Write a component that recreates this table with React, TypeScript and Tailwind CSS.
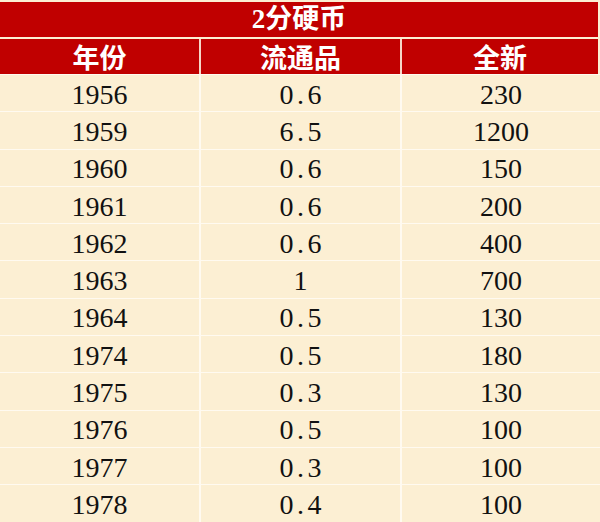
const rows: [string, string, string][] = [
  ['1956', '0.6', '230'],
  ['1959', '6.5', '1200'],
  ['1960', '0.6', '150'],
  ['1961', '0.6', '200'],
  ['1962', '0.6', '400'],
  ['1963', '1', '700'],
  ['1964', '0.5', '130'],
  ['1974', '0.5', '180'],
  ['1975', '0.3', '130'],
  ['1976', '0.5', '100'],
  ['1977', '0.3', '100'],
  ['1978', '0.4', '100'],
];

// every ascii char takes half an em, like a song-style font
function Num({ value }: { value: string }) {
  return (
    <span className="inline-flex">
      {value.split('').map((ch, i) => (
        <span key={i} className="inline-block w-[0.5em] text-center">{ch}</span>
      ))}
    </span>
  );
}

export default function App() {
  return (
    <div className="w-[600px] h-[522px] overflow-hidden bg-[#fcefd3] pt-[2px]">
      <div className="mr-[2px] flex h-[35px] items-center justify-center bg-[#c00000] text-[27px] font-bold text-white [font-family:'Liberation_Serif','Noto_Sans_CJK_SC',serif]">
        <span className="leading-none">2分硬币</span>
      </div>
      <div className="mr-[2px] mt-[2px] grid h-[35px] grid-cols-[199px_199px_1fr] gap-x-[2px] bg-[#f6d6c8] text-[27px] font-bold text-white [font-family:'Noto_Sans_CJK_SC',sans-serif]">
        <div className="flex items-center justify-center bg-[#c00000] leading-none">年份</div>
        <div className="flex items-center justify-center bg-[#c00000] leading-none">流通品</div>
        <div className="flex items-center justify-center bg-[#c00000] leading-none">全新</div>
      </div>
      <div className="text-[28px] text-[#111] [font-family:'Liberation_Serif',serif]">
        {rows.map(([year, used, mint]) => (
          <div key={year} className="grid h-[37.3px] grid-cols-[199px_2px_199px_2px_1fr] border-t border-[#fffaf0]">
            <div className="flex items-center justify-center pt-[3px] leading-none"><Num value={year} /></div>
            <div className="bg-[#fffaf0]" />
            <div className="flex items-center justify-center pt-[3px] leading-none"><Num value={used} /></div>
            <div className="bg-[#fffaf0]" />
            <div className="flex items-center justify-center pt-[3px] leading-none"><Num value={mint} /></div>
          </div>
        ))}
      </div>
    </div>
  );
}
